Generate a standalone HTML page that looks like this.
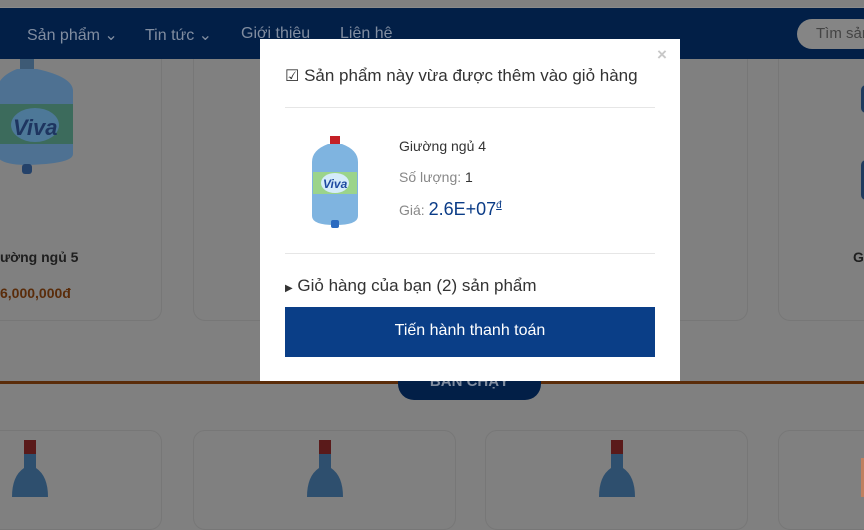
<!DOCTYPE html>
<html><head><meta charset="utf-8"><style>
*{margin:0;padding:0;box-sizing:border-box}
body{width:864px;height:497px;overflow:hidden;background:#808080;font-family:"Liberation Sans",sans-serif;position:relative}
.abs{position:absolute}
.nav{left:0;top:8px;width:864px;height:51px;background:#021f47;z-index:2}
.top{left:0;top:0;width:864px;height:8px;background:#808080;border-bottom:1px solid #8a8a8a;z-index:2}
.nav span{position:absolute;top:17px;color:#818da0;font-size:16px}
.card{position:absolute;border:1px solid #777;border-radius:12px}
.modal{left:260px;top:39px;width:420px;height:342px;background:#fff;z-index:3}
</style></head><body>
<div class="abs top"></div>
<div class="abs nav">
<span style="left:27px">Sản phẩm ⌄</span>
<span style="left:145px">Tin tức ⌄</span>
<span style="left:241px">Giới thiệu</span>
<span style="left:340px">Liên hệ</span>
<div class="abs" style="left:797px;top:11px;width:80px;height:30px;border-radius:15px;background:#858585;color:#444;font-size:15px;padding:6px 0 0 19px">Tìm sản</div>
</div>
<div class="card" style="left:-20px;top:40px;width:182px;height:281px"></div>
<div class="card" style="left:193px;top:40px;width:263px;height:281px"></div>
<div class="card" style="left:485px;top:40px;width:263px;height:281px"></div>
<div class="card" style="left:778px;top:40px;width:120px;height:281px"></div>
<svg class="abs" style="left:-5px;top:59px" width="85" height="115" viewBox="0 0 85 115"><rect x="25" y="0" width="14" height="10" fill="#3d5a75"/><path d="M22 10 Q2 18 2 32 L2 95 Q2 105 30 106 Q78 105 78 95 L78 32 Q78 18 42 10Z" fill="#4e7192"/><rect x="2" y="45" width="76" height="40" fill="#3c6b5c"/><ellipse cx="40" cy="66" rx="24" ry="17" fill="#4d7898"/><text x="18" y="76" font-size="22" font-style="italic" font-weight="bold" fill="#1e3560" font-family="Liberation Sans">Viva</text><rect x="27" y="105" width="10" height="10" rx="3" fill="#24426a"/></svg>
<div class="abs" style="left:0;top:249px;font-size:14px;font-weight:bold;color:#1e1e1e">ường ngủ 5</div>
<div class="abs" style="left:0;top:285px;font-size:14px;font-weight:bold;color:#5a2c0a">6,000,000đ</div>
<div class="abs" style="left:853px;top:249px;font-size:14px;font-weight:bold;color:#1e1e1e">G</div>
<div class="abs" style="left:861px;top:85px;width:10px;height:28px;border-radius:5px;background:#1f3a5e"></div>
<div class="abs" style="left:861px;top:160px;width:10px;height:40px;border-radius:5px;background:#1f3a5e"></div>
<div class="abs" style="left:0;top:381px;width:864px;height:3px;background:#5a2c0a"></div>
<div class="abs" style="left:398px;top:365px;width:143px;height:35px;border-radius:0 0 16px 16px;background:#021f47;color:#818da0;font-weight:bold;font-size:15px;text-align:center;padding-top:8px">BÁN CHẠY</div>
<div class="card" style="left:-20px;top:430px;width:182px;height:100px"></div>
<div class="card" style="left:193px;top:430px;width:263px;height:100px"></div>
<div class="card" style="left:485px;top:430px;width:263px;height:100px"></div>
<div class="card" style="left:778px;top:430px;width:120px;height:100px"></div>
<div class="abs" style="left:861px;top:458px;width:3px;height:39px;background:#c08060"></div>
<svg class="abs" style="left:0;top:440px" width="864" height="57"><g id="b" fill="#2e4f6e"><rect x="24" y="0" width="12" height="14" fill="#5a1a1a"/><path d="M24 14 L36 14 L36 28 Q48 36 48 57 L12 57 Q12 36 24 28Z"/></g><use href="#b" x="295"/><use href="#b" x="587"/></svg>
<div class="abs modal">
<div class="abs" style="left:397px;top:6px;color:#c8c8c8;font-size:17px;font-weight:bold">×</div>
<div class="abs" style="left:25px;top:27px;font-size:17px;color:#333;white-space:nowrap"><span style="font-size:16px">☑</span> Sản phẩm này vừa được thêm vào giỏ hàng</div>
<div class="abs" style="left:25px;top:68px;width:370px;height:1px;background:#e6e6e6"></div>
<svg class="abs" style="left:50px;top:97px" width="50" height="92" viewBox="0 0 50 92"><rect x="20" y="0" width="10" height="8" fill="#c42026"/><path d="M18 8 Q2 14 2 26 L2 80 Q2 89 25 89 Q48 89 48 80 L48 26 Q48 14 32 8Z" fill="#7fb4e0"/><rect x="3" y="36" width="44" height="22" fill="#9bd48b"/><ellipse cx="25" cy="47" rx="14" ry="10" fill="#d5ecfa"/><text x="13" y="52" font-size="12" font-style="italic" font-weight="bold" fill="#1e4aa0" font-family="Liberation Sans">Viva</text><rect x="21" y="84" width="8" height="8" rx="2" fill="#2a6ac0"/></svg>
<div class="abs" style="left:139px;top:99px;font-size:14px;color:#333">Giường ngủ 4</div>
<div class="abs" style="left:139px;top:130px;font-size:14px;color:#888">Số lượng: <span style="color:#333">1</span></div>
<div class="abs" style="left:139px;top:160px;font-size:14px;color:#888">Giá: <span style="color:#0b3c87;font-size:18px">2.6E+07<sup style="font-size:10px;text-decoration:underline">đ</sup></span></div>
<div class="abs" style="left:25px;top:214px;width:370px;height:1px;background:#e6e6e6"></div>
<div class="abs" style="left:25px;top:237px;font-size:17px;color:#333;white-space:nowrap"><span style="font-size:10px">▶</span> Giỏ hàng của bạn (2) sản phẩm</div>
<div class="abs" style="left:25px;top:268px;width:370px;height:50px;background:#0a3e87;color:#fff;font-size:16px;text-align:center;line-height:48px">Tiến hành thanh toán</div>
</div>
</body></html>
